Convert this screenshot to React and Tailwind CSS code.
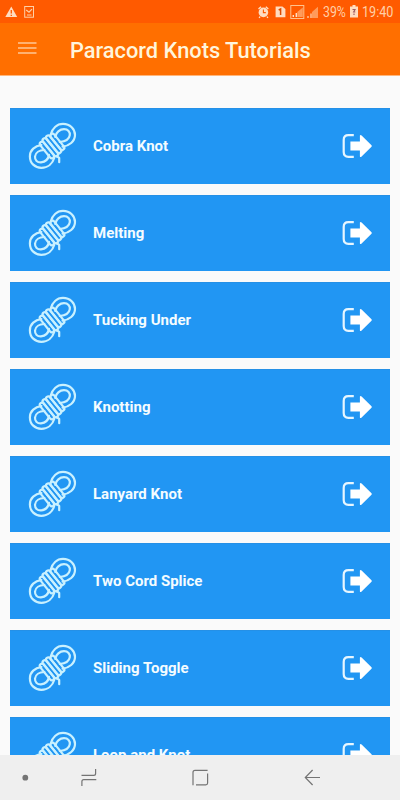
const knots = [
  'Cobra Knot',
  'Melting',
  'Tucking Under',
  'Knotting',
  'Lanyard Knot',
  'Two Cord Splice',
  'Sliding Toggle',
  'Loop and Knot',
];

function RopeIcon() {
  return (
    <svg width="50" height="50" viewBox="0 0 50 50" fill="none" stroke="#c9f1ff" strokeWidth="2.2" strokeLinecap="round" strokeLinejoin="round">
      <path d="M23.8 13.2 C25.4 7.8 29.6 2.9 36 2.9 C43.2 2.9 48 8 48 14 C48 20.5 42 24.9 35.6 25.6" />
      <path d="M28.2 16 C28.8 11.4 33 8.2 37 8.2 C41 8.2 43.2 11 42.8 14.2 C42.2 18.4 37.6 20.6 32.8 21" />
      <path d="M14.4 24 C8 24.9 2.9 29 2.9 35.4 C2.9 42.2 8 46.8 14.3 46.8 C21 46.8 25.6 42.4 27.2 37" />
      <path d="M17.4 29 C12.6 29.2 8.3 31.6 8 35.6 C7.8 39.2 10.4 41.6 14 41.4 C18.2 41.1 21.2 38.4 22 33.8" />
      <g transform="rotate(51 25.2 25)">
        <rect x="15.5" y="16.2" width="19.5" height="4.4" rx="2.2" />
        <rect x="14" y="20.6" width="21.5" height="4.4" rx="2.2" />
        <rect x="14" y="25" width="22" height="4.4" rx="2.2" />
        <rect x="15" y="29.4" width="20" height="4.4" rx="2.2" />
      </g>
      <path d="M29.5 35 L32.2 36.8 V41.2" />
    </svg>
  );
}

function OpenIcon() {
  return (
    <svg width="32" height="26" viewBox="0 0 32 26" fill="none">
      <path d="M12.8 2.2 H7.4 Q2.7 2.2 2.7 6.9 V19.1 Q2.7 23.8 7.4 23.8 H12.8" stroke="#e6f6ff" strokeWidth="2.2" />
      <path d="M9.4 8.5 H18.9 V2.4 Q19.4 1.4 20.6 2.4 L30.5 12.2 Q31.2 13 30.5 13.8 L20.6 23.6 Q19.4 24.6 18.9 23.6 V17.5 H9.4 Z" fill="#fff" />
    </svg>
  );
}

function StatusBar() {
  return (
    <div className="flex h-[23px] shrink-0 items-center bg-[#ff5a00] pl-[5px] pr-[6px] text-[#ffd0a8]">
      <svg width="32" height="14" viewBox="0 0 32 14" fill="none">
        <path d="M6.3 1.5 L12.2 12 H0.3 Z" fill="#ffdcc0" />
        <path d="M6.3 5 V8.5 M6.3 9.7 V11" stroke="#ff5a00" strokeWidth="1.3" />
        <rect x="19.7" y="1.5" width="8.8" height="10.7" stroke="currentColor" />
        <path d="M21.2 5 L24 7.2 L27 4.2 M22 10 H26.5" stroke="currentColor" strokeWidth="1.2" />
      </svg>
      <svg className="ml-auto" width="62" height="16" viewBox="0 0 62 16" fill="none">
        <circle cx="5.4" cy="8.4" r="4.8" fill="#ffdcc0" />
        <path d="M0.5 5 L3 2.8 M10.3 5 L7.8 2.8 M2 12.5 L1.2 14 M9 12.5 L9.8 14" stroke="#ffdcc0" strokeWidth="1.4" />
        <path d="M5.4 5.6 V8.6 H7.8" stroke="#ff5a00" strokeWidth="1.1" />
        <path d="M17.6 2.5 H24.4 L27.4 5 V13.3 H17.6 Z" fill="#ffdcc0" />
        <path d="M20.7 6 L22.6 5 V11" stroke="#dc4a00" strokeWidth="1.5" />
        <rect x="32.8" y="1.5" width="13" height="13" stroke="#ffc28c" />
        <path d="M39.3 13 V8 L44.8 3.5 V13 Z" fill="#ff9b5b" />
        <path d="M35.3 13 V11 M38.3 13 V9" stroke="#ffe0c6" strokeWidth="1.4" />
        <path d="M54 14 V8 L60 2.8 V14 Z" fill="#ff9b5b" />
        <path d="M50 14 V12 M53 14 V9.5" stroke="#ffc79d" strokeWidth="1.4" />
      </svg>
      <span className="ml-[3px] w-[24px] origin-left scale-x-[.85] whitespace-nowrap pt-[2px] text-[14.5px] leading-[21px]">39%</span>
      <svg className="ml-[3px]" width="8" height="13" viewBox="0 0 8 13" fill="none">
        <path d="M2.5 0 H5.5 V1.5 H8 V12.5 H0 V1.5 H2.5 Z" fill="#ffdcc0" />
        <path d="M2.5 4.5 H5 L3.7 7 H5.3 M4 8.5 V10" stroke="#a05c62" strokeWidth="1.2" />
      </svg>
      <span className="ml-[4px] w-[32px] origin-left scale-x-[.87] whitespace-nowrap pt-[2px] text-[14.5px] leading-[21px]">19:40</span>
    </div>
  );
}

function NavBar() {
  return (
    <nav className="h-[45px] shrink-0 bg-[#efefef]">
      <svg width="400" height="45" viewBox="0 0 400 45" fill="none" stroke="#747474" strokeWidth="1.2">
        <circle cx="25.3" cy="22.7" r="2.9" fill="#747474" stroke="none" />
        <path d="M81.5 20.4 H93.7 Q95.6 20.4 95.6 18.5 V14 M96.3 24.6 H83.8 Q81.9 24.6 81.9 26.5 V31" />
        <path d="M207.6 18.5 V28 Q207.6 29.8 205.8 29.8 H196 M207.6 15.4 H195 Q193 15.4 193 17.4 V30.2" />
        <path d="M320 22.5 H305.6 M312.6 15 L305.3 22.5 L312.6 30" />
      </svg>
    </nav>
  );
}

export default function App() {
  return (
    <div className="flex h-[800px] w-[400px] flex-col overflow-hidden bg-[#fafafa] font-[Roboto,sans-serif]">
      <StatusBar />
      <header className="flex h-[53px] shrink-0 items-center border-b border-[#ffb67a] bg-[#ff6f00] pl-[18px]">
        <svg className="mb-[2px]" width="19" height="14" viewBox="0 0 19 14" stroke="#ffc795" strokeWidth="1.7">
          <path d="M0 2 H18.5 M0 7 H18.5 M0 12 H18.5" />
        </svg>
        <h1 className="ml-[33px] pt-[3px] text-[21.8px] leading-[26px] font-medium whitespace-nowrap text-[#fff5dc]">Paracord Knots Tutorials</h1>
      </header>
      <main className="flex min-h-0 flex-1 flex-col gap-[11.5px] overflow-hidden px-[10px] pt-[32.3px]">
        {knots.map((name) => (
          <div key={name} className="flex h-[75.5px] shrink-0 items-center border-t border-[#2590e6] bg-[#2196f3] px-[17px] pb-[2px]">
            <RopeIcon />
            <span className="ml-[16px] pt-px text-[15px] leading-[20px] font-bold text-[#f4fcff]">{name}</span>
            <span className="ml-auto">
              <OpenIcon />
            </span>
          </div>
        ))}
      </main>
      <NavBar />
    </div>
  );
}
